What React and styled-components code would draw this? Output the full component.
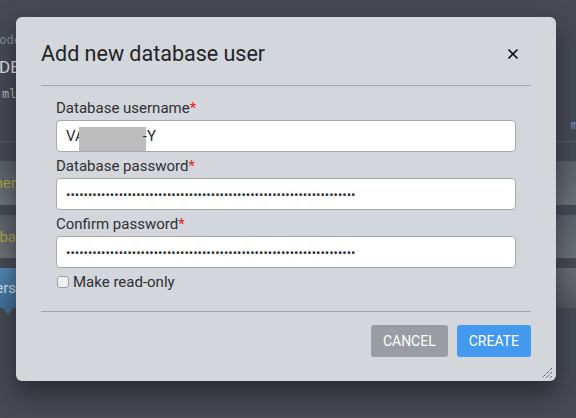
import React from "react";
import styled, { createGlobalStyle } from "styled-components";

const GlobalStyle = createGlobalStyle`
  html, body {
    margin: 0;
    padding: 0;
    background: #474a53;
    font-family: Roboto, "Liberation Sans", sans-serif;
  }
  * { box-sizing: border-box; }
`;

const Page = styled.div`
  position: relative;
  width: 576px;
  height: 418px;
  overflow: hidden;
  background: #474a53;
`;

const PageTop = styled.div`
  height: 142px;
  padding-top: 33px;
  border-bottom: 1px solid #595c64;
  display: flex;
  justify-content: space-between;
`;

const TopLeft = styled.div`
  display: flex;
  flex-direction: column;
  gap: 9px;
`;

const MonoLine = styled.div`
  font-family: "DejaVu Sans Mono", monospace;
  font-size: 12px;
  line-height: 14px;
  color: ${({ light }) => (light ? "#b9bcc2" : "#8c9097")};
  margin-left: ${({ shift }) => shift}px;
  white-space: nowrap;
`;

const BigLine = styled.div`
  font-size: 17px;
  line-height: 22px;
  color: #e4e6ea;
  margin-left: -1px;
`;

const TopRight = styled.div`
  padding-top: 85px;
  font-family: "DejaVu Sans Mono", monospace;
  font-size: 12px;
  color: #6f98c4;
  margin-right: -2px;
`;

const Rows = styled.div`
  display: flex;
  flex-direction: column;
  gap: 10px;
  padding-top: 19px;
`;

const BgRow = styled.div`
  position: relative;
  height: ${({ h }) => h}px;
  display: flex;
  align-items: center;
  background: ${({ active }) =>
    active
      ? "linear-gradient(#6a6d72, #55585d)"
      : "linear-gradient(#5c6068, #6d7178)"};
`;

const RowLabel = styled.div`
  width: 16px;
  height: 100%;
  display: flex;
  align-items: center;
  overflow: hidden;
  white-space: nowrap;
  direction: rtl;
  font-size: 15px;
  color: ${({ active }) => (active ? "#d7e3ee" : "#b3a84c")};
  background: ${({ active }) =>
    active ? "linear-gradient(#5288b3, #3f6f98)" : "transparent"};

  &::after {
    content: "";
    display: ${({ active }) => (active ? "block" : "none")};
    position: absolute;
    left: 3px;
    bottom: -7px;
    border-left: 5px solid transparent;
    border-right: 5px solid transparent;
    border-top: 7px solid #3f6f98;
  }
`;

const Overlay = styled.div`
  position: absolute;
  inset: 0;
  display: flex;
  align-items: flex-start;
  padding: 17px 0 0 16px;
`;

const Modal = styled.div`
  position: relative;
  width: 540px;
  background: #d3d6da;
  border-radius: 6px;
  box-shadow: 0 12px 24px rgba(20, 22, 28, 0.6);
`;

const Header = styled.div`
  margin: 0 25px;
  padding: 25px 0 19px;
  border-bottom: 1px solid #a2a5aa;
  display: flex;
  align-items: center;
  justify-content: space-between;
`;

const Title = styled.h2`
  margin: 0;
  font-size: 21.5px;
  line-height: 24px;
  font-weight: 400;
  color: #222429;
`;

const CloseButton = styled.button`
  border: none;
  background: none;
  padding: 0;
  margin-right: 12px;
  width: 12px;
  height: 12px;
  display: flex;
  cursor: pointer;
`;

const Body = styled.div`
  margin: 0 25px;
  padding: 12px 15px 19px;
  border-bottom: 1px solid #a2a5aa;
`;

const Field = styled.div`
  display: flex;
  flex-direction: column;
  gap: 2px;
  margin-bottom: 4px;
`;

const Label = styled.label`
  font-size: 15px;
  line-height: 20px;
  color: #2e3035;

  span {
    color: #ee1c24;
  }
`;

const inputBox = `
  height: 32px;
  width: 100%;
  border: 1px solid #a6a9ae;
  border-radius: 4px;
  background: #fff;
  padding: 0 9px;
  font-family: Roboto, "Liberation Sans", sans-serif;
  font-size: 15px;
  color: #2e3035;
`;

const FakeInput = styled.div`
  ${inputBox}
  display: flex;
  align-items: center;
  white-space: nowrap;
`;

const Redacted = styled.span`
  display: inline-block;
  width: 67px;
  height: 24px;
  margin: 6px -3px 0 -6px;
  background: #bdbdbd;
`;

const Input = styled.input`
  ${inputBox}
  font-size: 13px;
  outline: none;
`;

const CheckRow = styled.label`
  display: flex;
  align-items: center;
  gap: 4px;
  font-size: 15px;
  line-height: 20px;
  color: #2e3035;
`;

const Box = styled.span`
  width: 12px;
  height: 12px;
  margin-left: 1px;
  border: 1px solid #9a9da2;
  border-radius: 3px;
  background: #eeeff1;
`;

const Footer = styled.div`
  margin: 0 25px;
  padding: 13px 0 24px;
  display: flex;
  justify-content: flex-end;
  gap: 9px;
`;

const Button = styled.button`
  height: 32px;
  padding: 0 12px;
  border: none;
  border-radius: 3px;
  font-family: Roboto, "Liberation Sans", sans-serif;
  font-size: 14px;
  color: #fff;
  cursor: pointer;
  background: ${({ primary }) => (primary ? "#4299ed" : "#999ca3")};
`;

const Grip = styled.svg`
  position: absolute;
  right: 3px;
  bottom: 2px;
`;

const App = () => {
  const dots = "x".repeat(66);

  return (
    <>
      <GlobalStyle />
      <Page>
        <PageTop>
          <TopLeft>
            <MonoLine shift={-8}>node</MonoLine>
            <BigLine>DB</BigLine>
            <MonoLine light shift={2}>ml</MonoLine>
          </TopLeft>
          <TopRight>m</TopRight>
        </PageTop>
        <Rows>
          <BgRow h={44}>
            <RowLabel>Other</RowLabel>
          </BgRow>
          <BgRow h={43}>
            <RowLabel>Databa</RowLabel>
          </BgRow>
          <BgRow h={40} active>
            <RowLabel active>Users</RowLabel>
          </BgRow>
        </Rows>

        <Overlay>
          <Modal>
            <Header>
              <Title>Add new database user</Title>
              <CloseButton aria-label="Close">
                <svg width="12" height="12" viewBox="0 0 12 12">
                  <path
                    d="M1.5 1.5 L10.5 10.5 M10.5 1.5 L1.5 10.5"
                    stroke="#111"
                    strokeWidth="1.7"
                  />
                </svg>
              </CloseButton>
            </Header>
            <Body>
              <Field>
                <Label>
                  Database username<span>*</span>
                </Label>
                <FakeInput>
                  VA<Redacted />-Y
                </FakeInput>
              </Field>
              <Field>
                <Label>
                  Database password<span>*</span>
                </Label>
                <Input type="password" defaultValue={dots} />
              </Field>
              <Field>
                <Label>
                  Confirm password<span>*</span>
                </Label>
                <Input type="password" defaultValue={dots} />
              </Field>
              <CheckRow>
                <Box />
                Make read-only
              </CheckRow>
            </Body>
            <Footer>
              <Button>CANCEL</Button>
              <Button primary>CREATE</Button>
            </Footer>
            <Grip width="12" height="12" viewBox="0 0 12 12">
              <path
                d="M11 1 L1 11 M11 5 L5 11 M11 9 L9 11"
                stroke="#333"
                strokeWidth="1"
                strokeDasharray="1 1"
              />
            </Grip>
          </Modal>
        </Overlay>
      </Page>
    </>
  );
};

export default App;
